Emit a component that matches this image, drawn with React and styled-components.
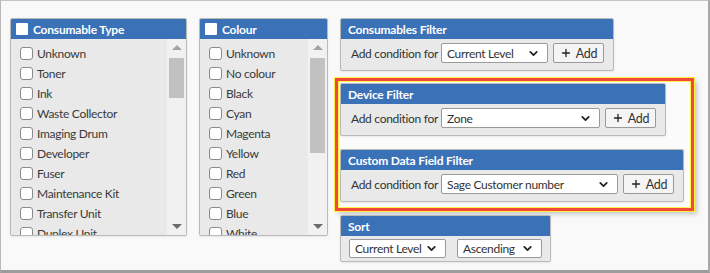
import React from 'react';
import styled, { createGlobalStyle } from 'styled-components';
import { ChevronDown, Plus } from 'lucide-react';

const GlobalStyle = createGlobalStyle`
  body {
    margin: 0;
    background: #f9f9f9;
    font-family: Lato, "Liberation Sans", sans-serif;
    color: #333;
  }
`;

const Frame = styled.div`
  box-sizing: border-box;
  width: 710px;
  height: 273px;
  background: #f9f9f9;
  border-top: 1px solid #c4c4c4;
  border-left: 1px solid #b8b8b8;
  border-right: 2px solid #a8a8a8;
  border-bottom: 3px solid #9c9c9c;
  padding: 17px 0 0 9px;
  display: flex;
  align-items: flex-start;
  overflow: hidden;
`;

const Panel = styled.div`
  box-sizing: border-box;
  background: #e9e9e9;
  border: 1px solid #b9b9b9;
  border-radius: 2px;
  box-shadow: 0 1px 2px rgba(0, 0, 0, 0.08);
  display: flex;
  flex-direction: column;
  overflow: hidden;
`;

const ListPanel = styled(Panel)`
  width: ${({ $width }) => $width}px;
  height: 218px;
  margin-right: 12px;
`;

const Header = styled.div`
  height: 20px;
  flex: none;
  background: #3a71b7;
  color: #fff;
  font-weight: 700;
  font-size: 12px;
  letter-spacing: -0.2px;
  display: flex;
  align-items: center;
  padding-left: ${({ $pad }) => $pad || 7}px;
  gap: 5px;
`;

const HeaderBox = styled.span`
  width: 12px;
  height: 12px;
  background: #fff;
  border-radius: 1px;
`;

const ListBody = styled.div`
  flex: 1;
  display: flex;
  min-height: 0;
`;

const Items = styled.div`
  flex: 1;
  padding: 4px 0 0 9px;
  overflow: hidden;
`;

const Item = styled.label`
  height: 20px;
  display: flex;
  align-items: center;
  gap: 4px;
  font-size: 12px;
  letter-spacing: -0.3px;
  color: #3a3a3a;
  white-space: nowrap;
`;

const Box = styled.span`
  box-sizing: border-box;
  width: 13px;
  height: 13px;
  background: #fff;
  border: 1px solid #8a8a8a;
  border-radius: 3px;
  flex: none;
`;

const Scrollbar = styled.div`
  width: 19px;
  flex: none;
  background: #f1f1f1;
  display: flex;
  flex-direction: column;
  align-items: center;
`;

const Arrow = styled.div`
  height: 17px;
  width: 100%;
  display: flex;
  align-items: center;
  justify-content: center;
  flex: none;
  &::after {
    content: '';
    border-left: 5px solid transparent;
    border-right: 5px solid transparent;
    ${({ $down }) => ($down ? 'border-top: 5px solid #6b6b6b;' : 'border-bottom: 5px solid #a3a3a3;')}
  }
`;

const Track = styled.div`
  flex: 1;
  width: 100%;
  padding: 2px 2px 0 2px;
  box-sizing: border-box;
`;

const Thumb = styled.div`
  height: ${({ $h }) => $h}px;
  background: #c1c1c1;
`;

const Column = styled.div`
  display: flex;
  flex-direction: column;
  align-items: flex-start;
  margin-left: -5px;
`;

const FilterPanel = styled(Panel)`
  margin-left: ${({ $inset }) => ($inset ? 0 : 5)}px;
`;

const FilterBody = styled.div`
  display: flex;
  align-items: center;
  padding: ${({ $sort }) => ($sort ? '3px 8px 3px 8px' : '4px 9px 7px 10px')};
  font-size: 12px;
  letter-spacing: -0.3px;
  color: #333;
  gap: ${({ $sort }) => ($sort ? 11 : 4)}px;
`;

const Label = styled.span`
  width: 86px;
  white-space: nowrap;
`;

const Select = styled.div`
  box-sizing: border-box;
  width: ${({ $w }) => $w}px;
  height: ${({ $h }) => $h || 20}px;
  background: #fff;
  border: 1px solid #9a9a9a;
  border-radius: 2px;
  display: flex;
  align-items: center;
  justify-content: space-between;
  padding: 0 7px 0 5px;
  white-space: nowrap;
`;

const Button = styled.div`
  box-sizing: border-box;
  height: 20px;
  width: 51px;
  margin-left: 1px;
  background: #f5f5f5;
  border: 1px solid #9a9a9a;
  border-radius: 2px;
  display: flex;
  align-items: center;
  justify-content: center;
  gap: 4px;
  font-size: 12.5px;
  color: #333;
`;

const Highlight = styled.div`
  box-sizing: border-box;
  width: 359px;
  margin-top: 7px;
  border: 3px solid #f2473b;
  box-shadow: inset 0 0 0 1px #fff34a, 0 0 0 1px #fff34a, 3px 3px 5px rgba(0, 0, 0, 0.22);
  background: #fbfbfb;
  padding: 2px 0 6px 2px;
  display: flex;
  flex-direction: column;
  align-items: flex-start;
  gap: 13px;
`;

const SortPanel = styled(FilterPanel)`
  margin-top: 4px;
`;

const consumableTypes = [
  'Unknown', 'Toner', 'Ink', 'Waste Collector', 'Imaging Drum', 'Developer',
  'Fuser', 'Maintenance Kit', 'Transfer Unit', 'Duplex Unit',
];

const colours = [
  'Unknown', 'No colour', 'Black', 'Cyan', 'Magenta', 'Yellow', 'Red',
  'Green', 'Blue', 'White',
];

const CheckList = ({ title, items, width, thumb }) => (
  <ListPanel $width={width}>
    <Header $pad={5}>
      <HeaderBox />
      {title}
    </Header>
    <ListBody>
      <Items>
        {items.map((item) => (
          <Item key={item}>
            <Box />
            {item}
          </Item>
        ))}
      </Items>
      <Scrollbar>
        <Arrow />
        <Track>
          <Thumb $h={thumb} />
        </Track>
        <Arrow $down />
      </Scrollbar>
    </ListBody>
  </ListPanel>
);

const Dropdown = ({ value, width, height }) => (
  <Select $w={width} $h={height}>
    <span>{value}</span>
    <ChevronDown size={13} strokeWidth={3.2} color="#222" />
  </Select>
);

const ConditionFilter = ({ title, value, width, inset }) => (
  <FilterPanel $inset={inset}>
    <Header>{title}</Header>
    <FilterBody>
      <Label>Add condition for</Label>
      <Dropdown value={value} width={width} />
      <Button>
        <Plus size={12} strokeWidth={2.6} color="#222" />
        Add
      </Button>
    </FilterBody>
  </FilterPanel>
);

const App = () => (
  <>
    <GlobalStyle />
    <Frame>
      <CheckList title="Consumable Type" items={consumableTypes} width={177} thumb={40} />
      <CheckList title="Colour" items={colours} width={129} thumb={95} />
      <Column>
        <ConditionFilter title="Consumables Filter" value="Current Level" width={107} />
        <Highlight>
          <ConditionFilter title="Device Filter" value="Zone" width={159} inset />
          <ConditionFilter title="Custom Data Field Filter" value="Sage Customer number" width={177} inset />
        </Highlight>
        <SortPanel>
          <Header>Sort</Header>
          <FilterBody $sort>
            <Dropdown value="Current Level" width={97} height={19} />
            <Dropdown value="Ascending" width={85} height={19} />
          </FilterBody>
        </SortPanel>
      </Column>
    </Frame>
  </>
);

export default App;
